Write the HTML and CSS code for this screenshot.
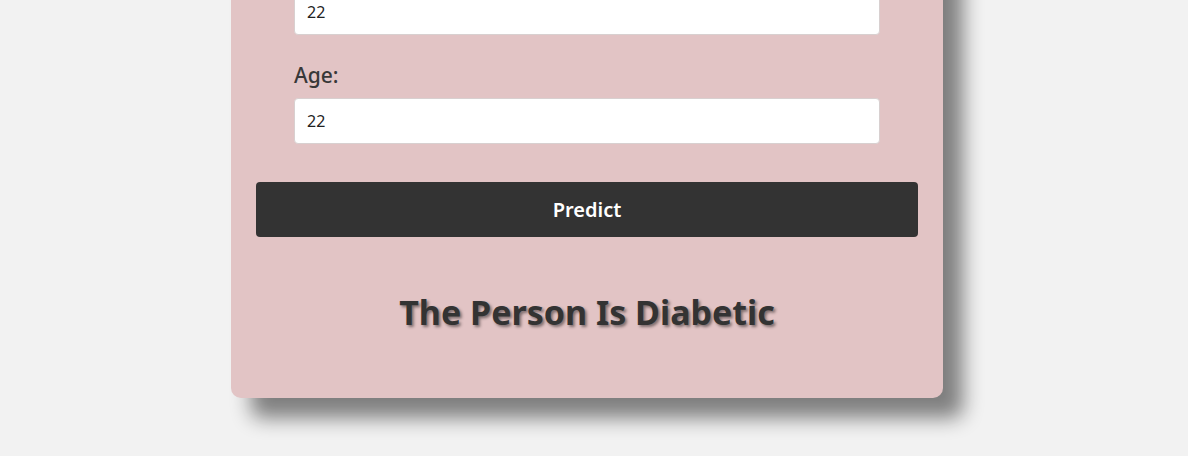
FILE: index.html
```html
<!DOCTYPE html>
<html lang="en">
<head>
<meta charset="utf-8">
<title>Diabetes Prediction</title>
<link rel="stylesheet" href="styles.css">
</head>
<body>
<div class="card">
  <form class="form">
    <div class="field first">
      <input class="input" type="text" value="22">
    </div>
    <div class="field">
      <label class="label">Age:</label>
      <input class="input" type="text" value="22">
    </div>
    <button class="btn" type="button">Predict</button>
  </form>
  <h2 class="result">The Person Is Diabetic</h2>
</div>
</body>
</html>
```
FILE: styles.css
```css
html {
  overflow: hidden;
  background: #f2f2f2;
}
body {
  margin: 0;
  padding: 0 0 80px;
  background: #f2f2f2;
  font-family: "Noto Sans", "Open Sans", sans-serif;
  min-height: 456px;
  box-sizing: border-box;
}
.card {
  width: 712px;
  margin: -100px 0 0 231px;
  background: #e2c4c5;
  border-radius: 0 0 10px 10px;
  box-shadow: 20px 20px 20px rgba(0, 0, 0, 0.48);
  padding: 0 0 1px;
}
.form {
  display: flex;
  flex-direction: column;
  padding: 0 25px;
}
.field {
  display: flex;
  flex-direction: column;
  padding: 0 38px;
}
.field.first {
  padding-top: 89px;
  padding-bottom: 25px;
}
.label {
  font-size: 21px;
  font-weight: 500;
  line-height: 30px;
  color: #383838;
  margin-bottom: 8px;
}
.input {
  height: 46px;
  box-sizing: border-box;
  border: 1px solid #d8d0d0;
  border-radius: 4px;
  background: #fff;
  padding: 0 12px;
  font-family: inherit;
  font-size: 16px;
  color: #222;
}
.btn {
  margin-top: 38px;
  height: 55px;
  border: none;
  border-radius: 4px;
  background: #333333;
  color: #fff;
  font-family: inherit;
  font-size: 20px;
  font-weight: 600;
}
.result {
  margin: 52px 0 62px;
  text-align: center;
  font-size: 34px;
  font-weight: 700;
  color: #333;
  text-shadow: 2px 2px 3px rgba(0, 0, 0, 0.45);
}
```
